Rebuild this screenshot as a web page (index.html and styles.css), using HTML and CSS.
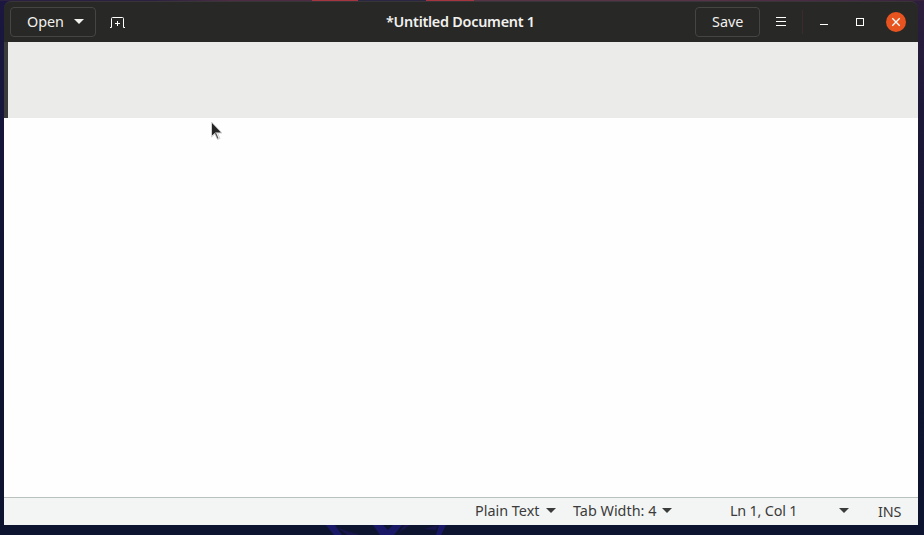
FILE: index.html
```
<!DOCTYPE html>
<html lang="en">
<head>
<meta charset="utf-8">
<title>Untitled Document 1</title>
<link rel="stylesheet" href="styles.css">
</head>
<body>
<div class="wall-top"></div>
<main class="window">
  <header class="header">
    <div class="start">
      <button class="btn open"><span class="label">Open</span><i class="caret"></i></button>
      <svg class="newtab" width="16" height="14" viewBox="0 0 16 14"><path d="M0 11.5H1.5V2.5Q1.5 1.5 2.5 1.5H12.5Q13.5 1.5 13.5 2.5V11.5H15M5 7.5H10M7.5 5V10" fill="none" stroke="#fff"/></svg>
    </div>
    <h1 class="title">*Untitled Document 1</h1>
    <div class="end">
      <button class="btn save"><span class="label">Save</span></button>
      <svg class="menu" width="12" height="12" viewBox="0 0 12 12"><path d="M1 1.5H11M1 5.5H11M1 9.5H11" stroke="#fff"/></svg>
      <i class="divider"></i>
      <svg class="min" width="8" height="12" viewBox="0 0 8 12"><path d="M0 8.5H8" stroke="#fff"/></svg>
      <svg class="max" width="8" height="8" viewBox="0 0 8 8"><rect x=".5" y=".5" width="7" height="7" fill="none" stroke="#fff"/></svg>
      <svg class="close" width="20" height="20" viewBox="0 0 20 20"><circle cx="10" cy="10" r="10" fill="#e75420"/><path d="M6.3 6.3L13.7 13.7M13.7 6.3L6.3 13.7" stroke="#fff" stroke-width="1.3"/></svg>
    </div>
  </header>
  <div class="tabs"></div>
  <section class="editor"></section>
  <footer class="status">
    <span class="label plain">Plain Text</span><i class="caret"></i>
    <span class="label tabw">Tab Width: 4</span><i class="caret"></i>
    <span class="label pos">Ln 1, Col 1</span><i class="caret"></i>
    <span class="label ins">INS</span>
  </footer>
</main>
<div class="wall-bottom"><svg width="924" height="10" viewBox="0 0 924 10"><path d="M326 0H335L342 10H334ZM373 0H383L388 5L393 0H402L394 10H380ZM439 0H446L441 10H436Z" fill="#211a85" opacity=".65"/><path d="M338 3L360 10H347ZM404 0H410L399 8ZM424 4L438 0L436 5Z" fill="#1c1554" opacity=".8"/></svg></div>
<svg class="pointer" width="14" height="22" viewBox="0 0 14 22"><path d="M1.5 2V17L5 14L7.5 19.5L10 18.5L7.5 13H12Z" fill="#fff" stroke="#d2d2d2"/><path d="M2 3V15.5L5.5 12.5H11Z" fill="#242424"/><path d="M5.5 13L8 18.5" stroke="#555" stroke-width="1.3"/></svg>
</body>
</html>
```
FILE: styles.css
```
* { box-sizing: border-box; }
body {
  margin: 0;
  width: 924px;
  height: 535px;
  overflow: hidden;
  display: flex;
  flex-direction: column;
  font: 14.4px "Noto Sans", "Open Sans", sans-serif;
  background:
    linear-gradient(180deg, #2d1e3d 0, #1d1838 110px, #10152f 300px, #0d142f) right / 462px 100% no-repeat,
    linear-gradient(180deg, #1b1740 0, #15153a 130px, #0f1532 300px, #0d142f);
}
.wall-top {
  height: 1px;
  flex: none;
  background: linear-gradient(90deg, #29213f 0 150px, #4b2c43 230px 312px, #a5363f 312px 358px, #292742 358px 426px, #a5363f 426px 474px, #573347 474px 700px, #38233d);
}
.window {
  width: 914px;
  height: 524px;
  margin-left: 4px;
  display: flex;
  flex-direction: column;
  flex: none;
}
.header {
  height: 41px;
  flex: none;
  display: grid;
  grid-template-columns: 382px 150px 1fr;
  align-items: center;
  background: #282826;
  border-top: 1px solid #393438;
  border-radius: 7px 7px 0 0;
  color: #f2f1ee;
}
.start, .end { display: flex; align-items: center; }
.start { padding-left: 6px; }
.btn {
  height: 30px;
  padding: 0;
  display: flex;
  align-items: center;
  border: 1px solid #454542;
  border-radius: 4px;
  background: #282826;
  color: inherit;
  font: inherit;
}
.label { white-space: nowrap; line-height: 20px; }
.open { width: 86px; padding-left: 16px; }
.open .label { width: 47px; text-align: left; letter-spacing: -.1px; }
.caret {
  width: 10px;
  height: 5px;
  flex: none;
  margin-bottom: 1px;
  background: currentColor;
  clip-path: polygon(0 0, 100% 0, 50% 100%);
}
.newtab { margin: 2px 0 0 14px; }
.title { margin: 0; font-size: 14.4px; line-height: 20px; font-weight: 600; white-space: nowrap; letter-spacing: -.25px; }
.end { padding-left: 159px; }
.save { width: 65px; padding-left: 16px; flex: none; }
.end svg { flex: none; }
.menu { margin-left: 15px; }
.divider { width: 1px; height: 24px; margin-left: 15px; background: #3b2c2b; }
.min { margin-left: 17px; }
.max { margin-left: 28px; }
.close { margin-left: 22px; }
.tabs { height: 76px; flex: none; background: #ebebe9; border-left: 4px solid #3b3b3b; }
.editor { flex: 1; background: #fffeff; }
.status {
  height: 28px;
  flex: none;
  display: flex;
  align-items: center;
  padding-left: 471px;
  border-top: 1px solid #b9c1bd;
  background: #f3f5f4;
  color: #3b3b3b;
}
.status .label { margin-bottom: 2px; }
.status .caret { margin-bottom: 2px; }
.plain { width: 71px; }
.tabw { width: 89px; margin-left: 17px; }
.pos { width: 109px; margin-left: 58px; letter-spacing: -.2px; }
.status .ins { margin: 0 0 0 29px; letter-spacing: -.2px; }
.wall-bottom { height: 10px; flex: none; }
.wall-bottom svg { display: block; }
.pointer { position: absolute; left: 210px; top: 120px; }
```
